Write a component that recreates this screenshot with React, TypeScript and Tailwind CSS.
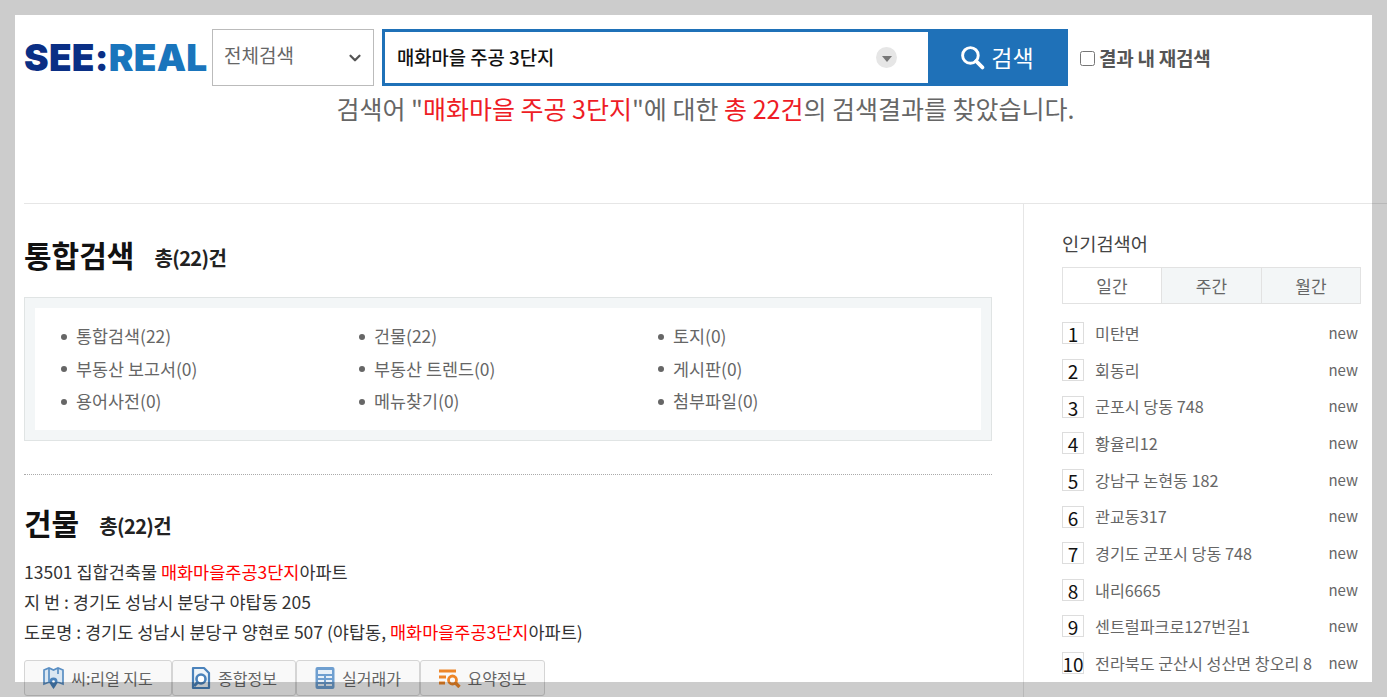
import * as React from 'react'
import {ChevronDown} from 'lucide-react'

const FONT = "font-['Noto_Sans_CJK_KR','Noto_Sans',sans-serif]"

const categories = [
  '통합검색(22)',
  '건물(22)',
  '토지(0)',
  '부동산 보고서(0)',
  '부동산 트렌드(0)',
  '게시판(0)',
  '용어사전(0)',
  '메뉴찾기(0)',
  '첨부파일(0)',
]

const keywords = [
  '미탄면',
  '회동리',
  '군포시 당동 748',
  '황율리12',
  '강남구 논현동 182',
  '관교동317',
  '경기도 군포시 당동 748',
  '내리6665',
  '센트럴파크로127번길1',
  '전라북도 군산시 성산면 창오리 8',
]

function MapIcon() {
  return (
    <svg width="21" height="24" viewBox="0 0 21 24" fill="none" stroke="#5a8fc4" strokeWidth="1.7">
      <path d="M1 4l5-2 4.500 2L15 2l5 2v14l-4-1.500H5L1 18z" fill="#dbe7f2" />
      <path d="M6 2v14M15 2v6" />
      <path d="M10.500 23c-2-3-4-5-4-7.500a4 4 0 018 0c0 2.500-2 4.500-4 7.500z" fill="#4a82bb" stroke="none" />
      <circle cx="10.500" cy="15.500" r="1.300" fill="#fff" stroke="none" />
    </svg>
  )
}

function DocIcon() {
  return (
    <svg width="20" height="24" viewBox="0 0 20 24" fill="none" stroke="#4a82bb" strokeWidth="2.200">
      <path d="M2 2h11l5 5v15H2z" fill="#eef4f9" strokeLinejoin="round" />
      <circle cx="10" cy="13" r="4.500" fill="#fff" strokeWidth="2.600" />
      <path d="M6.500 16.500L3 20" strokeWidth="3" />
    </svg>
  )
}

function SheetIcon() {
  return (
    <svg width="20" height="24" viewBox="0 0 20 24">
      <rect x="0.500" y="1" width="19" height="22" rx="2" fill="#6f9fd0" />
      <rect x="3" y="4" width="14" height="4" fill="#e8f0f8" />
      <path d="M3 10h6v2H3zM11 10h6v2h-6zM3 14h6v2H3zM11 14h6v2h-6zM3 18h6v2H3zM11 18h6v2h-6z" fill="#e8f0f8" />
    </svg>
  )
}

function SummaryIcon() {
  return (
    <svg width="22" height="20" viewBox="0 0 22 20" fill="none" stroke="#ee8628" strokeWidth="3">
      <path d="M0 3h17M0 9h7M0 15h6" />
      <circle cx="13.500" cy="12" r="4" strokeWidth="2.800" />
      <path d="M16.500 15l4 4" strokeWidth="3.400" />
    </svg>
  )
}

function ActionButton({icon, label, className}: {icon: React.ReactNode; label: string; className: string}) {
  return (
    <button className={`flex h-[36px] items-center justify-center gap-[7px] rounded-[3px] border border-[#d5d5d5] bg-[#f9f9f9] text-[16px] text-[#666] ${className}`}>
      {icon}
      <span>{label}</span>
    </button>
  )
}

function SectionTitle({title, count, className}: {title: string; count: string; className: string}) {
  return (
    <div className={`flex items-center ${className}`}>
      <h2 className="text-[30px] font-bold leading-[40px] text-[#111]">{title}</h2>
      <span className="mt-[8px] text-[20px] font-bold leading-[26px] tracking-[-0.6px] text-[#222]">{count}</span>
    </div>
  )
}

export default function App() {
  return (
    <div className={`relative h-[697px] w-[1387px] overflow-hidden bg-white ${FONT}`}>
      <header className="h-[203px] pl-[24px] pt-[29px]">
        <div className="flex items-start">
          <div className="mt-[12px] w-[188px] whitespace-nowrap font-['Inter',sans-serif] text-[37px] leading-[34px] font-black tracking-[0.25px]">
            <span className="text-[#0a2f85]">SEE:</span>
            <span className="text-[#1a75bc]">REAL</span>
          </div>
          <div className="flex h-[57px] w-[162px] items-center justify-between border border-[#bbb] pl-[11px] pr-[9px] text-[19px] text-[#666]">
            <span className="-mt-[5px]">전체검색</span>
            <ChevronDown size={18} strokeWidth={3} className="text-[#555]" />
          </div>
          <div className="ml-[8px] flex h-[57px] w-[686px] border-[3px] border-[#1f71b8]">
            <div className="flex flex-1 items-center justify-between pl-[12px] pr-[31px]">
              <span className="-mt-[1px] text-[18.800px] font-medium text-[#111]">매화마을 주공 3단지</span>
              <span className="flex h-[21px] w-[21px] items-center justify-center rounded-full bg-[#e6e6e6]">
                <span className="mt-[2px] h-0 w-0 border-x-[5px] border-t-[6px] border-x-transparent border-t-[#777]" />
              </span>
            </div>
            <button className="flex w-[137px] items-center justify-center gap-[6px] bg-[#1f71b8] pl-[1px] text-[23px] text-white">
              <svg width="25" height="25" viewBox="0 0 24 24" fill="none" stroke="#fff">
                <circle cx="10" cy="10" r="7.500" strokeWidth="2.800" />
                <path d="M15.500 15.500l6 6" strokeWidth="3.600" strokeLinecap="round" />
              </svg>
              <span>검색</span>
            </button>
          </div>
          <label className="ml-[12px] mt-[15px] flex items-center gap-[4px] text-[19px] font-bold tracking-[-0.25px] text-[#555]">
            <input type="checkbox" className="h-[15px] w-[15px]" />
            결과 내 재검색
          </label>
        </div>
        <p className="mt-[4px] w-[1363px] text-center text-[25px] leading-[36px] text-[#666]">
          검색어 "<span className="text-[#ee1c25]">매화마을 주공 3단지</span>"에 대한 <span className="text-[#ee1c25]">총 22건</span>의 검색결과를 찾았습니다.
        </p>
      </header>

      <div className="ml-[24px] flex h-[494px] border-t border-[#e6e6e6]">
        <main className="w-[1000px] shrink-0 border-r border-[#e6e6e6] pr-[31px]">
          <SectionTitle title="통합검색" count="총(22)건" className="mt-[30px] gap-[20px]" />
          <div className="mt-[23px] h-[144px] border border-[#e0e4e4] bg-[#f3f6f7] p-[10px]">
            <ul className="grid h-full grid-cols-[298px_299px_1fr] content-center bg-white pl-[26px]">
              {categories.map(item => (
                <li key={item} className="flex h-[32.500px] items-center gap-[9px] text-[17.400px] text-[#666]">
                  <span className="h-[6px] w-[6px] rounded-full bg-[#666]" />
                  {item}
                </li>
              ))}
            </ul>
          </div>
          <div className="mt-[33px] border-t border-dotted border-[#aaa]" />
          <SectionTitle title="건물" count="총(22)건" className="mt-[27px] gap-[20px]" />
          <div className="mt-[15px] text-[17.500px] leading-[30px] text-[#333]">
            <p>13501 집합건축물 <span className="text-[#f00]">매화마을주공3단지</span>아파트</p>
            <p>지 번 : 경기도 성남시 분당구 야탑동 205</p>
            <p>도로명 : 경기도 성남시 분당구 양현로 507 (야탑동, <span className="text-[#f00]">매화마을주공3단지</span>아파트)</p>
          </div>
          <div className="mt-[13px] flex">
            <ActionButton icon={<MapIcon />} label="씨:리얼 지도" className="w-[148px]" />
            <ActionButton icon={<DocIcon />} label="종합정보" className="w-[124px]" />
            <ActionButton icon={<SheetIcon />} label="실거래가" className="w-[124px]" />
            <ActionButton icon={<SummaryIcon />} label="요약정보" className="w-[125px]" />
          </div>
        </main>

        <aside className="ml-[38px] w-[299px] pt-[27px]">
          <h3 className="text-[18.700px] leading-[24px] text-[#444]">인기검색어</h3>
          <div className="mt-[12px] flex h-[37px] border border-[#e2e2e2] text-[17px] text-[#666]">
            <div className="flex w-[99px] items-center justify-center border-r border-[#e2e2e2]">일간</div>
            <div className="flex w-[100px] items-center justify-center border-r border-[#e2e2e2] bg-[#f3f6f7]">주간</div>
            <div className="flex flex-1 items-center justify-center bg-[#f3f6f7]">월간</div>
          </div>
          <ol className="mt-[11px]">
            {keywords.map((word, i) => (
              <li key={word} className="flex h-[36.650px] items-center pr-[3px] text-[16.200px] text-[#666]">
                <span className="flex h-[22px] w-[22px] items-center justify-center border border-[#ddd] pt-[2px] text-[19px] leading-[20px] text-[#111]">{i + 1}</span>
                <span className="ml-[11px] flex-1 whitespace-nowrap">{word}</span>
                <span className="text-[15px]">new</span>
              </li>
            ))}
          </ol>
        </aside>
      </div>

      <div className="pointer-events-none absolute inset-0 border-[15px] border-black/20" />
    </div>
  )
}
